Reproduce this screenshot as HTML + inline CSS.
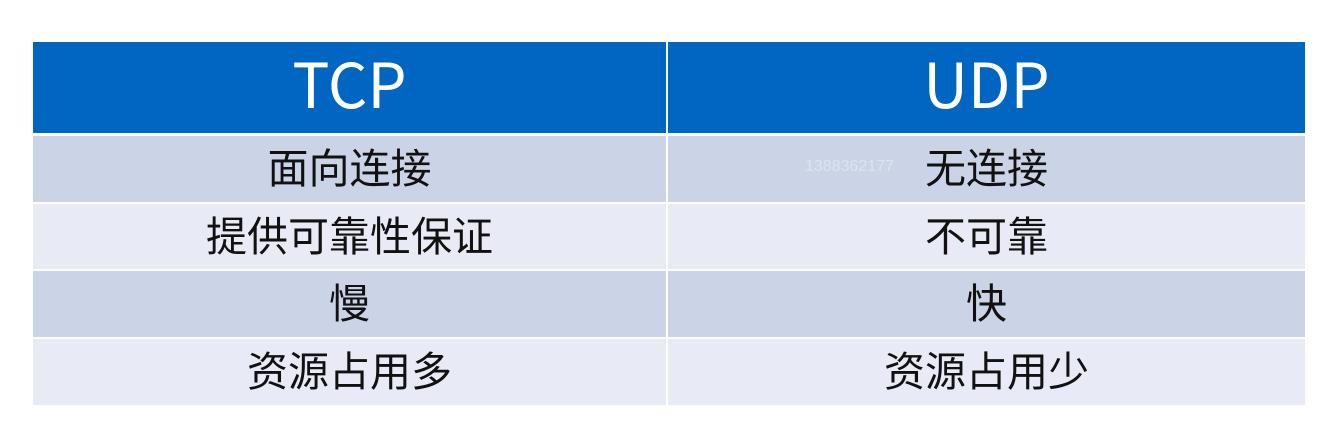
<!DOCTYPE html>
<html><head><meta charset="utf-8"><style>
body{margin:0;width:1338px;height:438px;background:#fff;position:relative;overflow:hidden;font-family:"Liberation Sans","Noto Sans CJK SC",sans-serif}
.c{position:absolute;display:flex;align-items:center;justify-content:center;color:#111;font-size:41px;padding-bottom:8px;box-sizing:border-box}
.h{background:#0066C2;color:#fff;font-size:62px;font-family:"Noto Sans CJK SC","Liberation Sans",sans-serif;padding-bottom:14px}
.o{background:#CBD3E7}.e{background:#E8EAF6}
.l{left:33px;width:633px}.r{left:668px;width:637px}
</style></head><body>
<div class="c h l" style="top:42px;height:91px">TCP</div>
<div class="c h r" style="top:42px;height:91px">UDP</div>
<div class="c o l" style="top:136px;height:66px">面向连接</div>
<div class="c o r" style="top:136px;height:66px">无连接</div>
<div style="position:absolute;left:805px;top:158px;font-size:16px;color:#dde2ef">1388362177</div>
<div class="c e l" style="top:204px;height:65px">提供可靠性保证</div>
<div class="c e r" style="top:204px;height:65px">不可靠</div>
<div class="c o l" style="top:271px;height:66px">慢</div>
<div class="c o r" style="top:271px;height:66px">快</div>
<div class="c e l" style="top:339px;height:66px">资源占用多</div>
<div class="c e r" style="top:339px;height:66px">资源占用少</div>
</body></html>
